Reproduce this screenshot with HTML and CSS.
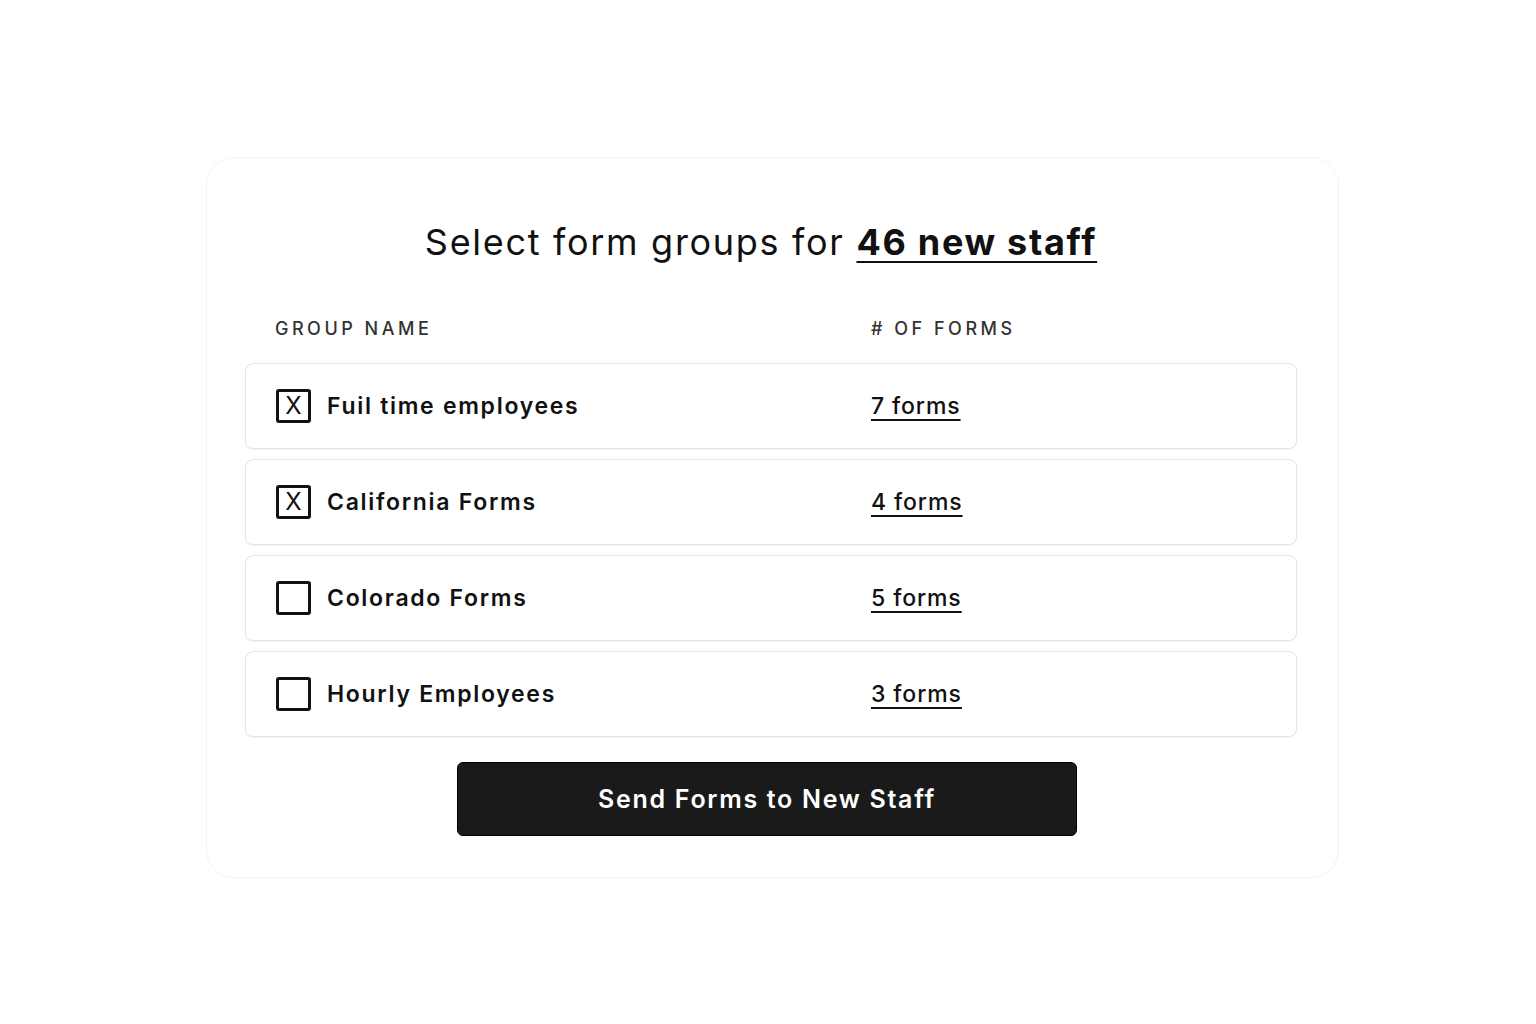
FILE: index.html
```html
<!DOCTYPE html>
<html lang="en">
<head>
    <meta charset="UTF-8">
    <meta name="viewport" content="width=device-width, initial-scale=1.0">
    <title>Select form groups</title>
    <link rel="stylesheet" href="styles.css">
</head>
<body>
    <div class="page">
        <div class="card">
            <h1 class="title">Select form groups for <a href="#" class="staff-link">46 new staff</a></h1>

            <div class="table-head">
                <span>Group Name</span>
                <span># of Forms</span>
            </div>

            <div class="group-list">
                <label class="group-row">
                    <span class="check checked">X</span>
                    <span class="group-name">Fuil time employees</span>
                    <a href="#" class="form-count">7 forms</a>
                </label>
                <label class="group-row">
                    <span class="check checked">X</span>
                    <span class="group-name">California Forms</span>
                    <a href="#" class="form-count">4 forms</a>
                </label>
                <label class="group-row">
                    <span class="check"></span>
                    <span class="group-name">Colorado Forms</span>
                    <a href="#" class="form-count">5 forms</a>
                </label>
                <label class="group-row">
                    <span class="check"></span>
                    <span class="group-name">Hourly Employees</span>
                    <a href="#" class="form-count">3 forms</a>
                </label>
            </div>

            <div class="actions">
                <button class="send-btn">Send Forms to New Staff</button>
            </div>
        </div>
    </div>
</body>
</html>
```

FILE: styles.css
```css
body {
    margin: 0;
    background-color: #ffffff;
    font-family: 'Inter', 'Open Sans', sans-serif;
    color: #111;
}

.page {
    padding: 157px 0 0 206px;
}

.card {
    box-sizing: border-box;
    width: 1133px;
    padding: 45px 41px 41px 38px;
    border: 1px solid #f2f2f2;
    border-radius: 28px;
    background: #fff;
}

.title {
    margin: 0;
    text-align: center;
    font-size: 36px;
    font-weight: 400;
    line-height: 78px;
    letter-spacing: 1.7px;
    padding-right: 20px;
}

.staff-link {
    color: #111;
    font-weight: 700;
    text-decoration: underline;
    text-decoration-thickness: 2px;
    text-underline-offset: 6px;
}

.table-head {
    display: grid;
    grid-template-columns: 596px 1fr;
    padding: 0 30px;
    margin-top: 22px;
    height: 50px;
    align-items: center;
    font-size: 18px;
    font-weight: 500;
    text-transform: uppercase;
    letter-spacing: 3.5px;
    color: #333;
}

.group-list {
    display: flex;
    flex-direction: column;
    gap: 10px;
    margin-top: 10px;
}

.group-row {
    display: grid;
    grid-template-columns: 35px 560px 1fr;
    align-items: center;
    height: 84px;
    padding: 0 30px;
    border: 1px solid #e4e4e4;
    border-radius: 8px;
    box-shadow: 0 1px 2px rgba(0,0,0,0.04);
}

.check {
    box-sizing: border-box;
    width: 35px;
    height: 34px;
    border: 3px solid #111;
    border-radius: 3px;
    display: flex;
    align-items: center;
    justify-content: center;
    font-size: 24px;
    font-weight: 400;
    line-height: 1;
}

.group-name {
    padding-left: 16px;
    font-size: 23px;
    font-weight: 600;
    letter-spacing: 1.7px;
}

.form-count {
    color: #111;
    font-size: 23px;
    font-weight: 500;
    letter-spacing: 0.9px;
    text-decoration: underline;
    text-decoration-thickness: 2px;
    text-underline-offset: 5px;
}

.actions {
    display: flex;
    justify-content: center;
    margin-top: 25px;
    padding-right: 8px;
}

.send-btn {
    width: 620px;
    height: 74px;
    background: #1a1a1a;
    color: #fff;
    border: 1px solid #000;
    border-radius: 6px;
    font-family: 'Inter', 'Open Sans', sans-serif;
    font-size: 25px;
    font-weight: 600;
    letter-spacing: 1.7px;
}
```
